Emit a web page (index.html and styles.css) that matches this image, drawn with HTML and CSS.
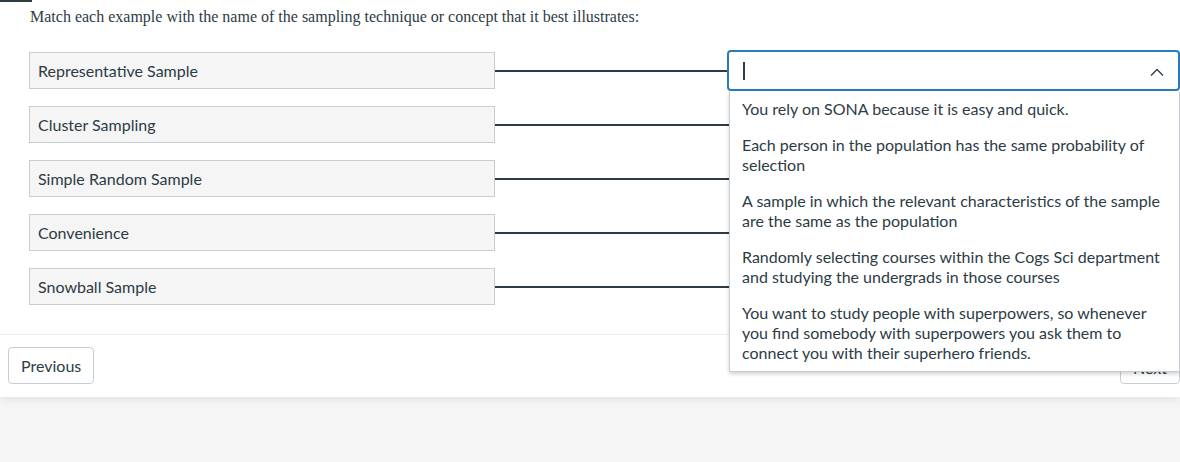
FILE: index.html
```html
<!DOCTYPE html>
<html>
<head>
<meta charset="utf-8">
<link rel="stylesheet" href="styles.css">
</head>
<body>
<div class="card">
  <div class="topbar"></div>
  <p class="question">Match each example with the name of the sampling technique or concept that it best illustrates:</p>
  <div class="matches">
    <div class="match-row">
      <div class="term">Representative Sample</div>
      <div class="connector"></div>
      <div class="select-wrap">
        <div class="select focused">
          <span class="caret"></span>
          <svg class="chevron" width="14" height="8" viewBox="0 0 14 8"><path d="M1 7.5 L7 1.5 L13 7.5" fill="none" stroke="#2d3b45" stroke-width="1.3"/></svg>
        </div>
        <ul class="dropdown">
          <li>You rely on SONA because it is easy and quick.</li>
          <li>Each person in the population has the same probability of selection</li>
          <li>A sample in which the relevant characteristics of the sample are the same as the population</li>
          <li>Randomly selecting courses within the Cogs Sci department and studying the undergrads in those courses</li>
          <li>You want to study people with superpowers, so whenever you find somebody with superpowers you ask them to connect you with their superhero friends.</li>
        </ul>
      </div>
    </div>
    <div class="match-row">
      <div class="term">Cluster Sampling</div>
      <div class="connector"></div>
      <div class="select-wrap"><div class="select"></div></div>
    </div>
    <div class="match-row">
      <div class="term">Simple Random Sample</div>
      <div class="connector"></div>
      <div class="select-wrap"><div class="select"></div></div>
    </div>
    <div class="match-row">
      <div class="term">Convenience</div>
      <div class="connector"></div>
      <div class="select-wrap"><div class="select"></div></div>
    </div>
    <div class="match-row">
      <div class="term">Snowball Sample</div>
      <div class="connector"></div>
      <div class="select-wrap"><div class="select"></div></div>
    </div>
  </div>
  <div class="nav">
    <button class="btn">Previous</button>
    <button class="btn btn-next">Next</button>
  </div>
</div>
<div class="footer"></div>
</body>
</html>
```
FILE: styles.css
```css
html, body {
  margin: 0;
  padding: 0;
}
body {
  background: #f5f5f5;
  font-family: Lato, "Noto Sans", sans-serif;
  color: #2d3b45;
  overflow: hidden;
}
.card {
  background: #ffffff;
  height: 397px;
  box-shadow: 0 3px 8px rgba(0, 0, 0, 0.07);
  position: relative;
  z-index: 1;
}
.topbar {
  width: 32px;
  height: 2px;
  background: #2d3b45;
}
.question {
  margin: 0;
  padding: 6px 0 0 30px;
  font-family: "Liberation Serif", serif;
  font-size: 16px;
  line-height: 18px;
  color: #2d3b45;
}
.matches {
  display: flex;
  flex-direction: column;
  gap: 13px;
  padding: 24px 0 27px 29px;
  border-bottom: 1px solid #eeeeee;
}
.match-row {
  display: flex;
  align-items: center;
  height: 41px;
}
.term {
  box-sizing: border-box;
  width: 466px;
  height: 37px;
  background: #f5f5f5;
  border: 1px solid #c7cdd1;
  padding: 0 8px;
  display: flex;
  align-items: center;
  font-size: 16px;
}
.connector {
  width: 234px;
  height: 2px;
  background: #2d3b45;
}
.select-wrap {
  position: relative;
  width: 451px;
  height: 41px;
}
.select {
  box-sizing: border-box;
  height: 41px;
  border: 1px solid #c7cdd1;
  border-radius: 4px;
  background: #fff;
  display: flex;
  align-items: center;
  justify-content: space-between;
  padding: 0 14px;
}
.select.focused {
  margin-left: -2px;
  border: 2px solid #2b7abc;
}
.caret {
  width: 2px;
  height: 18px;
  background: #2d3b45;
}
.chevron {
  display: block;
  margin-top: 2px;
}
.dropdown {
  position: absolute;
  top: 41px;
  left: 0;
  width: 451px;
  box-sizing: border-box;
  margin: 0;
  padding: 0;
  list-style: none;
  background: #fff;
  border: 1px solid #c7cdd1;
  border-top: none;
  box-shadow: 0 2px 4px rgba(0, 0, 0, 0.18);
  z-index: 5;
}
.dropdown li {
  padding: 8px 13px 8px 12px;
  font-size: 16px;
  line-height: 20px;
}
.nav {
  display: flex;
  justify-content: space-between;
  padding: 12px 0 0 8px;
}
.btn {
  box-sizing: border-box;
  height: 37px;
  padding: 0 12px;
  border: 1px solid #c7cdd1;
  border-radius: 4px;
  background: #fff;
  font-family: Lato, "Noto Sans", sans-serif;
  font-size: 16px;
  color: #2d3b45;
}
.btn-next {
  padding-top: 4px;
}
.footer {
  height: 65px;
  background: #f5f5f5;
}
```
